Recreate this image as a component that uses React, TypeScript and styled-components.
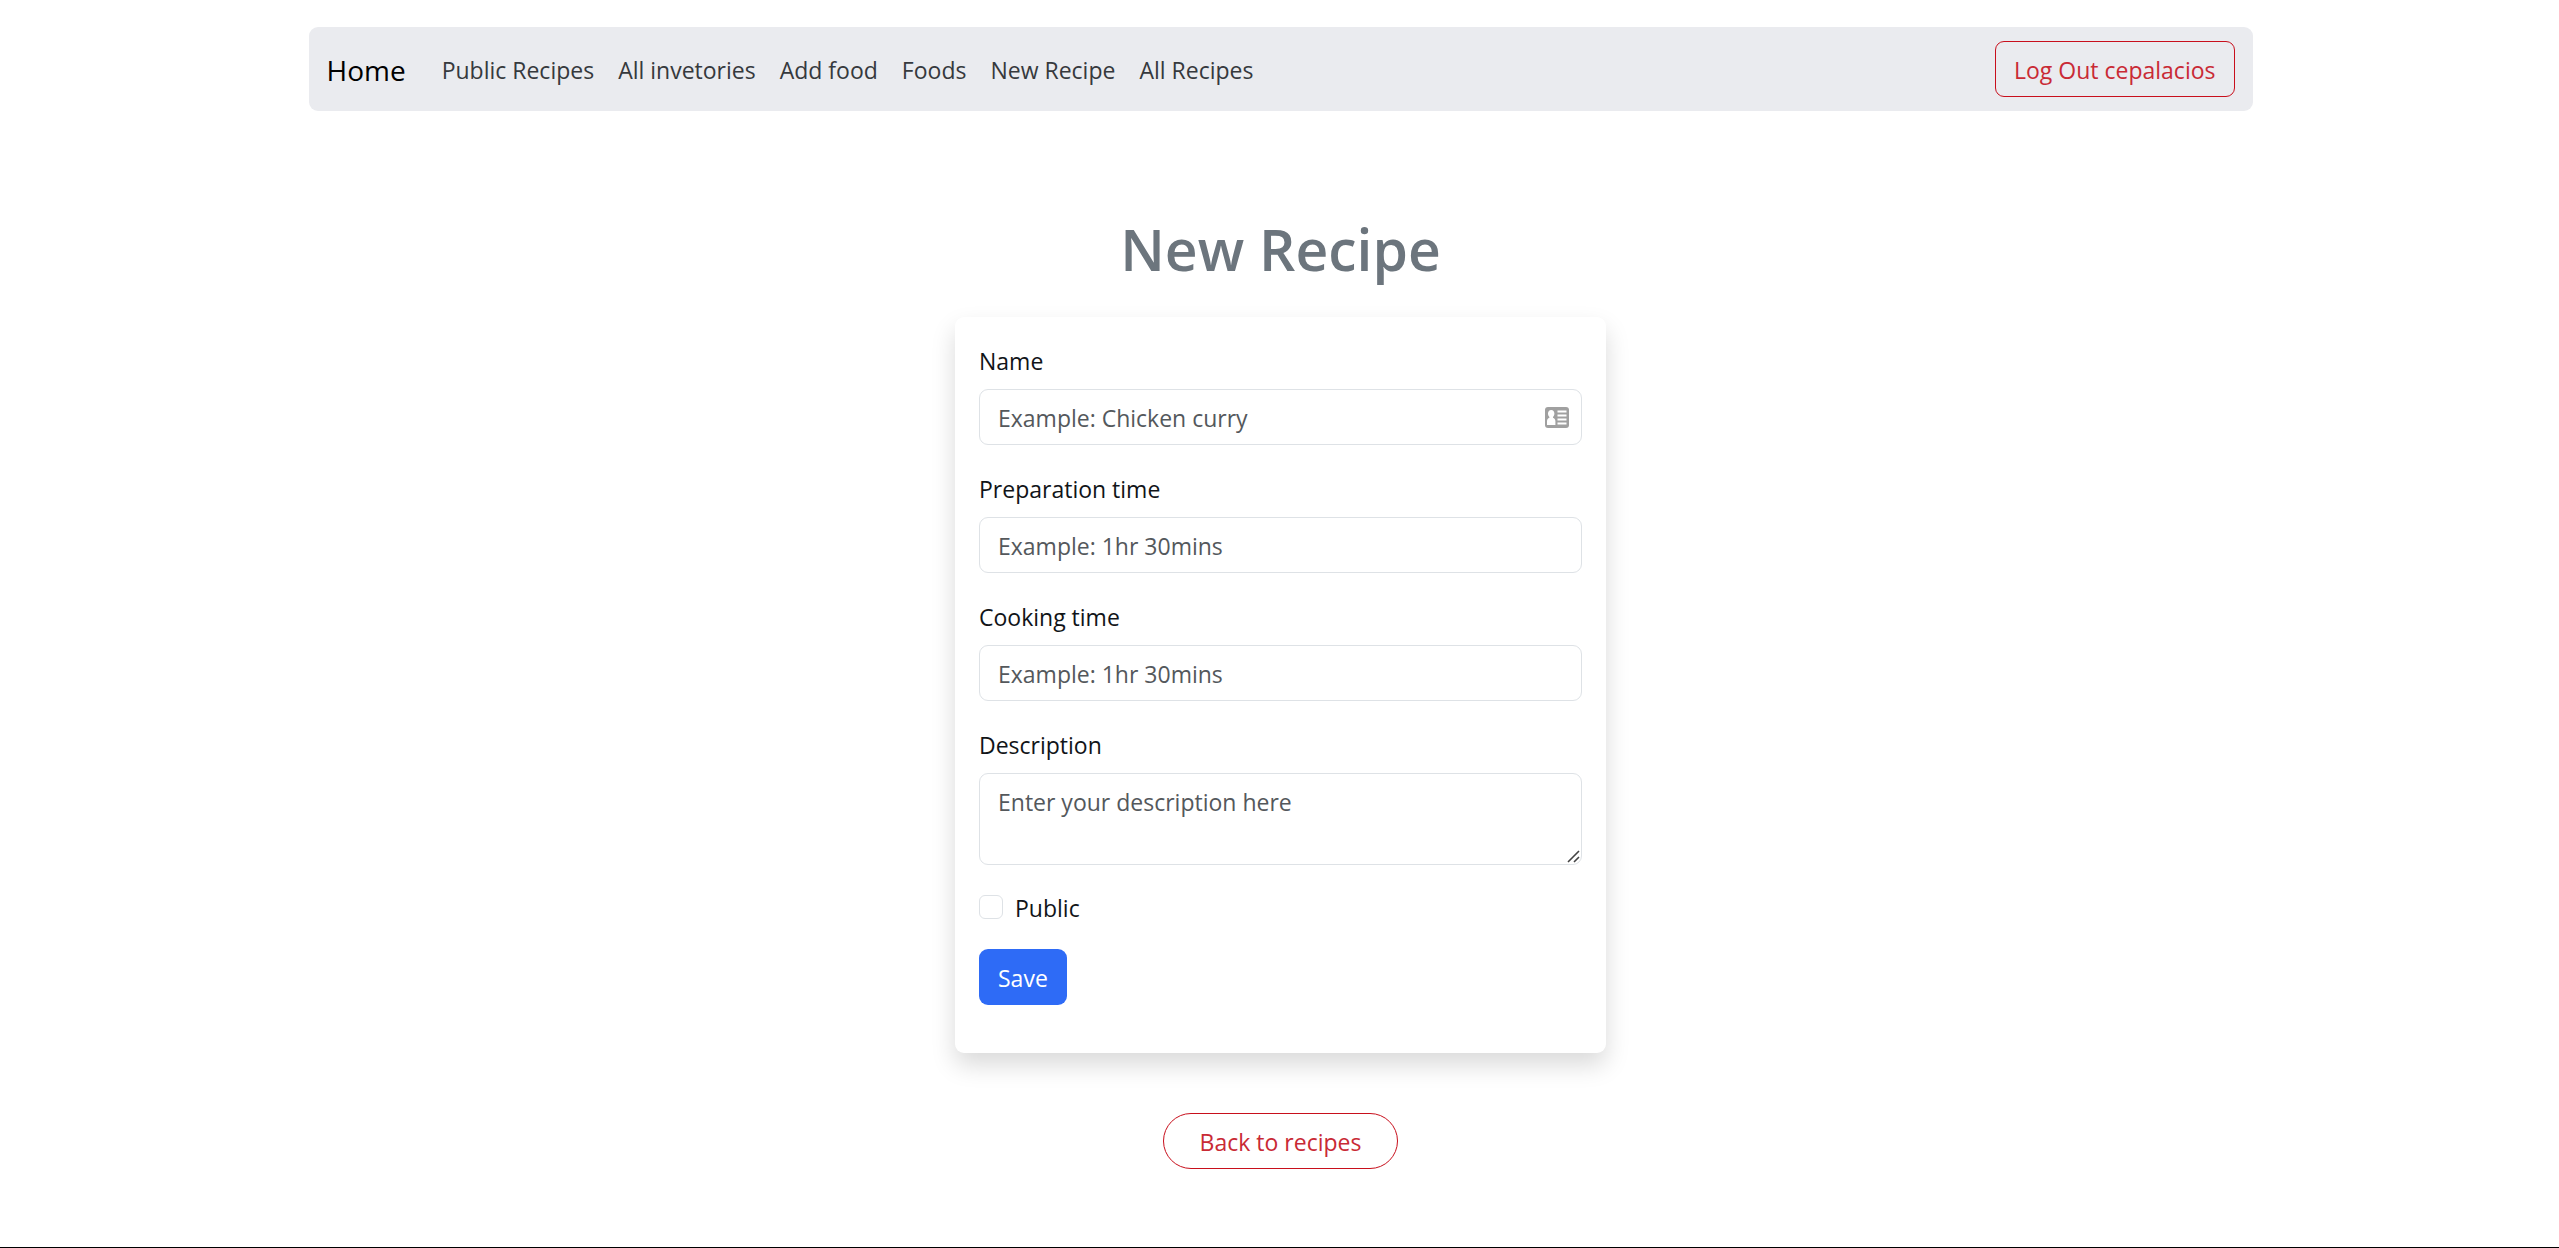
import React from "react";
import styled, { createGlobalStyle } from "styled-components";

const GlobalStyle = createGlobalStyle`
  *, *::before, *::after { box-sizing: border-box; }
  body {
    margin: 0;
    background: #fff;
    color: #111418;
    font-family: "Open Sans", "Noto Sans", sans-serif;
    font-size: 23px;
    line-height: 36px;
  }
  button, input, textarea { font: inherit; }
`;

const Page = styled.div`
  display: flex;
  flex-direction: column;
  align-items: center;
  min-height: 100vh;
  padding: 27px 0 0 2px;
`;

const Navbar = styled.nav`
  display: flex;
  align-items: center;
  width: 100%;
  max-width: 1944px;
  padding: 14px 18px;
  border-radius: 9px;
  background: #eaebef;
`;

const Brand = styled.a`
  margin-right: 36px;
  padding-top: 2px;
  color: #000;
  font-size: 28px;
  text-decoration: none;
`;

const NavList = styled.ul`
  display: flex;
  flex: 1;
  gap: 24px;
  margin: 0;
  padding: 2px 0 0;
  list-style: none;
`;

const NavLink = styled.a`
  color: #36393d;
  text-decoration: none;
`;

const OutlineButton = styled.button<{ $pill?: boolean }>`
  padding: 10px ${(p) => (p.$pill ? "36px" : "18px")} 8px;
  border: 1px solid #c80f1c;
  border-radius: ${(p) => (p.$pill ? "28px" : "9px")};
  background: transparent;
  color: #c92a35;
  cursor: pointer;
`;

const Main = styled.main`
  display: flex;
  flex-direction: column;
  align-items: center;
  width: 100%;
  padding-top: 102px;
`;

const Title = styled.h1`
  margin: 0 0 32px;
  color: #6c757d;
  font-size: 57px;
  font-weight: 600;
  line-height: 72px;
`;

const Card = styled.form`
  display: flex;
  flex-direction: column;
  align-items: flex-start;
  gap: 24px;
  width: 100%;
  max-width: 651px;
  margin-bottom: 60px;
  padding: 24px 24px 48px;
  border-radius: 9px;
  background: #fff;
  box-shadow: 0 12px 24px rgba(0, 0, 0, 0.15);
`;

const Field = styled.div`
  display: flex;
  flex-direction: column;
  gap: 10px;
  width: 100%;
`;

const Label = styled.label`
  padding-top: 2px;
`;

const Control = styled.div`
  position: relative;
  display: flex;
`;

const TextInput = styled.input`
  width: 100%;
  height: 56px;
  padding: 10px 18px 8px;
  border: 1px solid #dee2e6;
  border-radius: 9px;
  background: #fff;
  color: #212529;
  &::placeholder { color: #54585c; opacity: 1; }
`;

const TextArea = styled.textarea`
  width: 100%;
  height: 92px;
  padding: 10px 18px 8px;
  border: 1px solid #dee2e6;
  border-radius: 9px;
  background: #fff;
  color: #212529;
  resize: vertical;
  &::placeholder { color: #54585c; opacity: 1; }
  &::-webkit-resizer { background: transparent; }
`;

const ContactIcon = styled.svg`
  position: absolute;
  top: 18px;
  right: 13px;
  width: 24px;
  height: 21px;
`;

const GripIcon = styled.svg`
  position: absolute;
  right: 2px;
  bottom: 2px;
  width: 13px;
  height: 13px;
  pointer-events: none;
`;

const CheckRow = styled.div`
  display: flex;
  align-items: center;
  gap: 12px;
  height: 36px;
`;

const Checkbox = styled.input`
  appearance: none;
  width: 24px;
  height: 24px;
  margin: 0;
  border: 1px solid #dee2e6;
  border-radius: 6px;
  background: #fff;
  &:checked { border-color: #2e6bf6; background: #2e6bf6; }
`;

const SaveButton = styled.button`
  padding: 11px 19px 9px;
  border: 0;
  border-radius: 9px;
  background: #2e6bf6;
  color: #fff;
  cursor: pointer;
`;

const Footer = styled.footer`
  align-self: stretch;
  margin: auto 0 0 -2px;
  border-bottom: 1px solid #000;
`;

const links = ["Public Recipes", "All invetories", "Add food", "Foods", "New Recipe", "All Recipes"];

export default function App() {
  return (
    <>
      <GlobalStyle />
      <Page>
        <Navbar>
          <Brand href="#">Home</Brand>
          <NavList>
            {links.map((label) => (
              <li key={label}>
                <NavLink href="#">{label}</NavLink>
              </li>
            ))}
          </NavList>
          <OutlineButton type="button">Log Out cepalacios</OutlineButton>
        </Navbar>
        <Main>
          <Title>New Recipe</Title>
          <Card onSubmit={(e) => e.preventDefault()}>
            <Field>
              <Label htmlFor="name">Name</Label>
              <Control>
                <TextInput id="name" type="text" placeholder="Example: Chicken curry" />
                <ContactIcon viewBox="0 0 24 21" aria-hidden="true">
                  <rect width="24" height="21" rx="3" fill="#a0a0a0" />
                  <path
                    d="M6.200 3c2 0 3.200 1.500 3.200 3.600 0 1.500-.6 2.600-1.400 3.300v.9c1.400.5 2.400 1.500 2.400 3.400V18H2v-3.800c0-1.900 1-2.900 2.400-3.400v-.9C3.600 9.200 3 8.100 3 6.600 3 4.500 4.200 3 6.200 3z"
                    fill="#fff"
                  />
                  <path d="M12.500 4.500h9M12.500 8.500h9M12.500 12.500h9M12.500 16.500h9" stroke="#fff" strokeWidth="1.800" />
                </ContactIcon>
              </Control>
            </Field>
            <Field>
              <Label htmlFor="prep">Preparation time</Label>
              <Control>
                <TextInput id="prep" type="text" placeholder="Example: 1hr 30mins" />
              </Control>
            </Field>
            <Field>
              <Label htmlFor="cook">Cooking time</Label>
              <Control>
                <TextInput id="cook" type="text" placeholder="Example: 1hr 30mins" />
              </Control>
            </Field>
            <Field>
              <Label htmlFor="description">Description</Label>
              <Control>
                <TextArea id="description" placeholder="Enter your description here" />
                <GripIcon viewBox="0 0 13 13" aria-hidden="true">
                  <path d="M1 12L12 1M7 12L12 7" stroke="#444" strokeWidth="1.600" fill="none" />
                </GripIcon>
              </Control>
            </Field>
            <CheckRow>
              <Checkbox id="public" type="checkbox" />
              <Label htmlFor="public">Public</Label>
            </CheckRow>
            <SaveButton type="submit">Save</SaveButton>
          </Card>
          <OutlineButton type="button" $pill>Back to recipes</OutlineButton>
        </Main>
        <Footer />
      </Page>
    </>
  );
}
